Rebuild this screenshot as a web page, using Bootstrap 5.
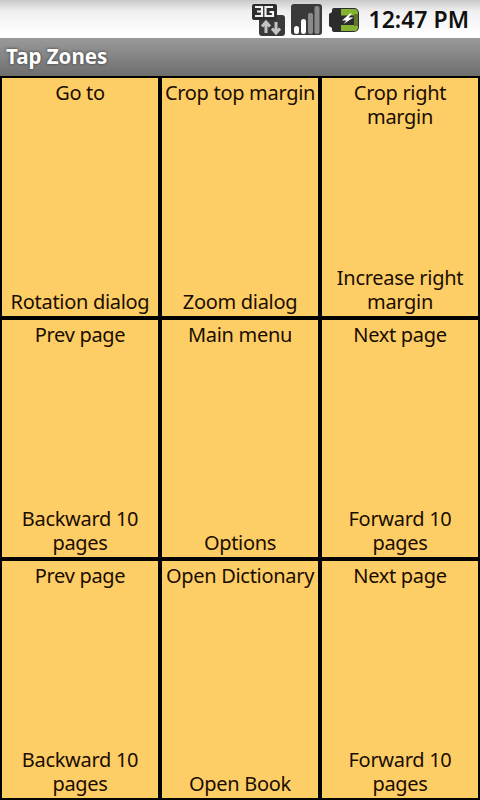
<!DOCTYPE html>
<html><head><meta charset="utf-8">
<link href="https://cdn.jsdelivr.net/npm/bootstrap@5.3.0/dist/css/bootstrap.min.css" rel="stylesheet">
<style>
html,body{width:480px;height:800px;margin:0;overflow:hidden;background:#000;}
.app{width:480px;height:800px;font-family:"Noto Sans","Open Sans",sans-serif;}
.sbar{height:38px;background:linear-gradient(#c9c9c9,#f0f0f0 30%,#fff 90%);padding-right:11px;}
.clock{font-size:23px;font-weight:600;color:#111;line-height:38px;margin-left:9px;}
.tbar{height:38px;background:linear-gradient(#9a9a9a,#6e6e6e);color:#fff;font-size:20.500px;font-weight:700;padding-left:6px;line-height:37px;text-shadow:0 0 3px #333;}
.zones{height:724px;background:#000;padding:2px;display:grid;grid-template-columns:156px 156px 156px;grid-template-rows:238px 237px 237px;column-gap:4px;row-gap:4px;}
.zone{background:#fece66;color:#1a0d00;font-size:20px;letter-spacing:-.3px;line-height:24px;text-align:center;display:flex;flex-direction:column;justify-content:space-between;padding:3px 0 2px;}
.sico{display:block;flex:none;}
.gap6{margin-left:6px;}
</style></head>
<body>
<div class="app">
<div class="sbar d-flex align-items-center justify-content-end">
<svg class="sico" width="33" height="36" viewBox="0 0 33 36"><rect x="7" y="14" width="26" height="21" rx="3" fill="#3a3a3a"/><rect x="0" y="3" width="25" height="16" rx="2" fill="#2e2e2e"/><path d="M3 6h7v9H3M5 10.500h5M21 6h-7.500v9H21v-4h-3.500" fill="none" stroke="#f2f2f2" stroke-width="2.200"/><path d="M14 32v-10M10 25.500l4-4.500 4 4.500" fill="none" stroke="#c4c4c4" stroke-width="3"/><path d="M24 21v10M20 27.500l4 4.500 4-4.500" fill="none" stroke="#c4c4c4" stroke-width="3"/></svg>
<svg class="sico gap6" width="31" height="36" viewBox="0 0 31 36"><rect x="0" y="3" width="31" height="31" rx="3" fill="#3a3a3a"/><rect x="3" y="25" width="5" height="8" rx="2.500" fill="#fff"/><rect x="10" y="18" width="5" height="15" rx="2.500" fill="#fff"/><rect x="17" y="12" width="5" height="21" rx="2" fill="#8a8a8a"/><rect x="23.500" y="5" width="5" height="28" rx="2" fill="#8a8a8a"/></svg>
<svg class="sico gap6" width="32" height="36" viewBox="0 0 32 36"><path d="M1 13l3-2V9a2 2 0 0 1 2-2h20a5 5 0 0 1 5 5v14a5 5 0 0 1-5 5H6a2 2 0 0 1-2-2v-2l-3-2z" fill="#2c2c2c"/><path d="M13 8h13a4 4 0 0 1 4 4v2.500H13zM13 24h17v2a4 4 0 0 1-4 4H13z" fill="#86b232"/><rect x="26" y="13" width="4" height="12" fill="#5c7a2a"/><path d="M22 12.500l-8 7h4.500l-3 3.500 10-6.500h-5l3.500-4z" fill="#fff"/></svg>
<span class="clock">12:47 PM</span>
</div>
<div class="tbar">Tap Zones</div>
<div class="zones">
<div class="zone"><div>Go to</div><div>Rotation dialog</div></div>
<div class="zone"><div>Crop top margin</div><div>Zoom dialog</div></div>
<div class="zone"><div>Crop right margin</div><div>Increase right margin</div></div>
<div class="zone"><div>Prev page</div><div>Backward 10 pages</div></div>
<div class="zone"><div>Main menu</div><div>Options</div></div>
<div class="zone"><div>Next page</div><div>Forward 10 pages</div></div>
<div class="zone"><div>Prev page</div><div>Backward 10 pages</div></div>
<div class="zone"><div>Open Dictionary</div><div>Open Book</div></div>
<div class="zone"><div>Next page</div><div>Forward 10 pages</div></div>
</div>
</div>
<script src="https://cdn.jsdelivr.net/npm/bootstrap@5.3.0/dist/js/bootstrap.bundle.min.js"></script>
</body></html>
